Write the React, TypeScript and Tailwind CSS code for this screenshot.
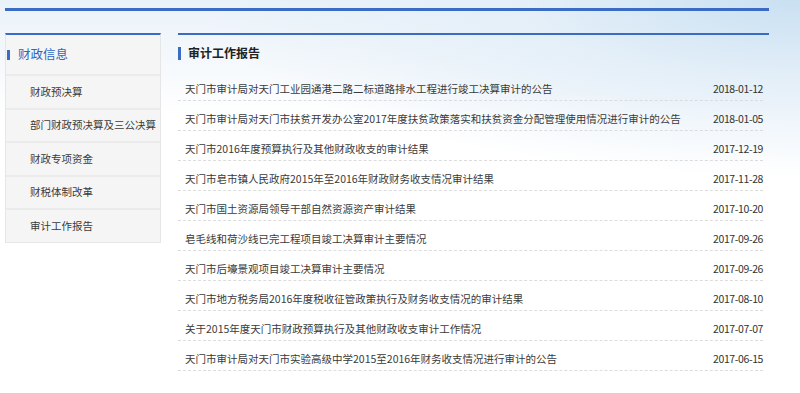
import React from 'react';

const sideLinks = ['财政预决算', '部门财政预决算及三公决算', '财政专项资金', '财税体制改革', '审计工作报告'];

const reports: { title: string; date: string }[] = [
  { title: '天门市审计局对天门工业园通港二路二标道路排水工程进行竣工决算审计的公告', date: '2018-01-12' },
  { title: '天门市审计局对天门市扶贫开发办公室2017年度扶贫政策落实和扶贫资金分配管理使用情况进行审计的公告', date: '2018-01-05' },
  { title: '天门市2016年度预算执行及其他财政收支的审计结果', date: '2017-12-19' },
  { title: '天门市皂市镇人民政府2015年至2016年财政财务收支情况审计结果', date: '2017-11-28' },
  { title: '天门市国土资源局领导干部自然资源资产审计结果', date: '2017-10-20' },
  { title: '皂毛线和荷沙线已完工程项目竣工决算审计主要情况', date: '2017-09-26' },
  { title: '天门市后壕景观项目竣工决算审计主要情况', date: '2017-09-26' },
  { title: '天门市地方税务局2016年度税收征管政策执行及财务收支情况的审计结果', date: '2017-08-10' },
  { title: '关于2015年度天门市财政预算执行及其他财政收支审计工作情况', date: '2017-07-07' },
  { title: '天门市审计局对天门市实验高级中学2015至2016年财务收支情况进行审计的公告', date: '2017-06-15' },
];

export default function App() {
  return (
    <div
      className="h-[393px] w-[800px] overflow-hidden bg-[radial-gradient(ellipse_75%_45%_at_100%_0%,#c9e0f2_0%,#e4eff8_45%,rgba(255,255,255,0)_100%),linear-gradient(180deg,#eaf2f9_0%,#ffffff_30%)] text-[#333]"
      style={{ fontFamily: '"Noto Sans CJK SC", "Noto Sans", sans-serif' }}
    >
      <div className="ml-[5px] w-[764px] pt-[8px]">
        {/* top rule */}
        <div className="h-[3px] bg-[#3a6cc6]" />

        <div className="mt-[22px] flex items-start gap-[17px]">
          {/* sidebar */}
          <aside className="w-[156px] border-t-2 border-[#3a6cc6] bg-[#f5f5f5] border-x border-b border-x-[#e6e6e6] border-b-[#e6e6e6]">
            <div className="flex h-[39px] items-center">
              <span className="ml-[1px] h-[10px] w-[3px] bg-[#3a6cc6]" />
              <span className="ml-[8px] text-[12.5px] leading-none text-[#2f67c2]">财政信息</span>
            </div>
            {sideLinks.map((s) => (
              <div
                key={s}
                className="flex h-[33.5px] items-center border-t-2 border-[#ebebeb] pl-[24px] text-[10.5px] leading-none text-[#3a3a3a]"
              >
                {s}
              </div>
            ))}
          </aside>

          {/* main list */}
          <main className="flex-1 border-t-2 border-[#3a6cc6]">
            <div className="flex h-[36px] items-center">
              <span className="h-[13px] w-[3px] bg-[#3a6cc6]" />
              <h2 className="ml-[7px] text-[12px] font-bold leading-none text-[#222]">审计工作报告</h2>
            </div>
            <ul className="mr-[6px]">
              {reports.map((r, i) => (
                <li
                  key={i}
                  className="flex items-center justify-between border-b border-dashed border-[#dcdcdc] pl-[7px] pt-[12px] pb-[5px] text-[10.5px] leading-[12px]"
                >
                  <span className="text-[#3a3a3a]">{r.title}</span>
                  <span className="tracking-[-0.4px] text-[#333]">{r.date}</span>
                </li>
              ))}
            </ul>
          </main>
        </div>
      </div>
    </div>
  );
}
